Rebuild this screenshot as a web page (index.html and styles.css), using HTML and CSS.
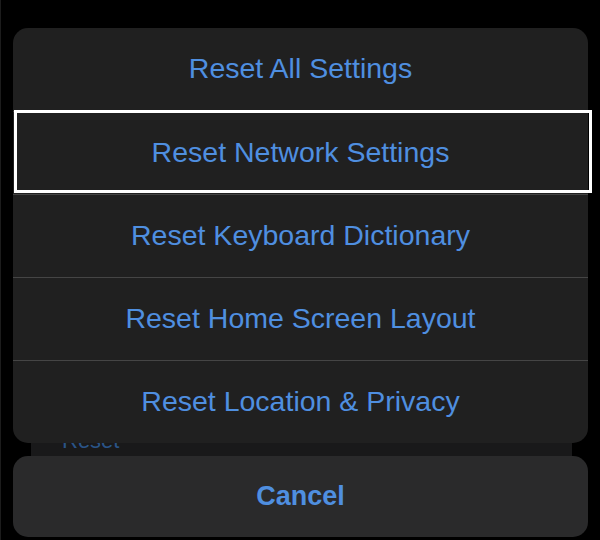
FILE: index.html
```html
<!DOCTYPE html>
<html lang="en">
<head>
    <meta charset="UTF-8">
    <meta name="viewport" content="width=device-width, initial-scale=1.0">
    <title>Reset</title>
    <link rel="stylesheet" href="styles.css">
</head>
<body>

    <div class="screen">
        <!-- page underneath the sheet -->
        <div class="backdrop">
            <span class="backdrop-link">Reset</span>
        </div>

        <div class="sheet">
            <div class="action">Reset All Settings</div>
            <div class="action focused">Reset Network Settings</div>
            <div class="action">Reset Keyboard Dictionary</div>
            <div class="action">Reset Home Screen Layout</div>
            <div class="action">Reset Location &amp; Privacy</div>
        </div>

        <div class="cancel">Cancel</div>
    </div>

</body>
</html>
```

FILE: styles.css
```css
/* action sheet, dark mode */
:root {
    --bg: #000; --sheet: #202020; --cancel: #2a2a2b;
    --blue: #4f8fe0; --line: #454545;
}
body { background: var(--bg); margin: 0; font-family: 'Liberation Sans', Arial, sans-serif; }
.screen { position: relative; width: 600px; height: 540px; overflow: hidden; padding: 28px 12px 0 12px; box-sizing: border-box; border-left: 1px solid #1c1c1c; }

.backdrop { position: absolute; left: 30px; right: 28px; top: 380px; height: 76px; background: #19191a; }
.backdrop-link { position: absolute; left: 31px; top: 48px; font-size: 22px; color: #2a5487; }

.sheet { position: relative; background: var(--sheet); border-radius: 15px; }
.action { height: 83px; box-sizing: border-box; display: flex; align-items: center; justify-content: center; color: var(--blue); font-size: 28.5px; border-top: 1px solid var(--line); position: relative; padding-bottom: 2px; }
.action:first-child { border-top: none; }

/* keyboard focus ring */
.focused::after { content: ''; position: absolute; left: 1px; right: -4px; top: -2px; bottom: 1px; border: 3px solid #fff; }

.cancel { margin-top: 13px; height: 81px; background: var(--cancel); border-radius: 15px; display: flex; align-items: center; justify-content: center; color: var(--blue); font-size: 27px; font-weight: bold; }
```
